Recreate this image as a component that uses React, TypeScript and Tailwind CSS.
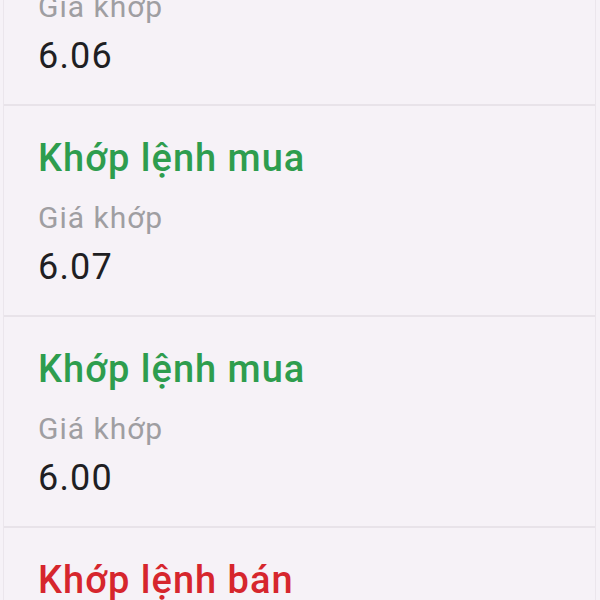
import React from "react";

type Fill = { side: "buy" | "sell"; price: string };

const fills: Fill[] = [
  { side: "buy", price: "6.06" },
  { side: "buy", price: "6.07" },
  { side: "buy", price: "6.00" },
  { side: "sell", price: "6.00" },
];

function FillRow({ fill }: { fill: Fill }) {
  const isBuy = fill.side === "buy";
  return (
    <div className="border-b-2 border-[#e8e3e9] pl-[34px] pt-[34px] pb-[31px]">
      <div
        className={
          "text-[38px] leading-[36px] font-medium tracking-[1px] " +
          (isBuy ? "text-[#2e9d4e]" : "text-[#d6262d]")
        }
      >
        {isBuy ? "Khớp lệnh mua" : "Khớp lệnh bán"}
      </div>
      <div className="mt-[27px] text-[30px] leading-[29px] tracking-[1px] text-[#9f9ea2]">Giá khớp</div>
      <div className="mt-[18px] text-[36px] leading-[34px] tracking-[1.2px] text-[#1f1f23]">{fill.price}</div>
    </div>
  );
}

export default function App() {
  return (
    <div className="h-[600px] w-[600px] overflow-hidden bg-[#f6f2f7] font-['Roboto',sans-serif]">
      <div className="-mt-[105px] ml-[3px] mr-[4px] border-x border-[#ebe6ec]">
        {fills.map((f, i) => (
          <FillRow key={i} fill={f} />
        ))}
      </div>
    </div>
  );
}
